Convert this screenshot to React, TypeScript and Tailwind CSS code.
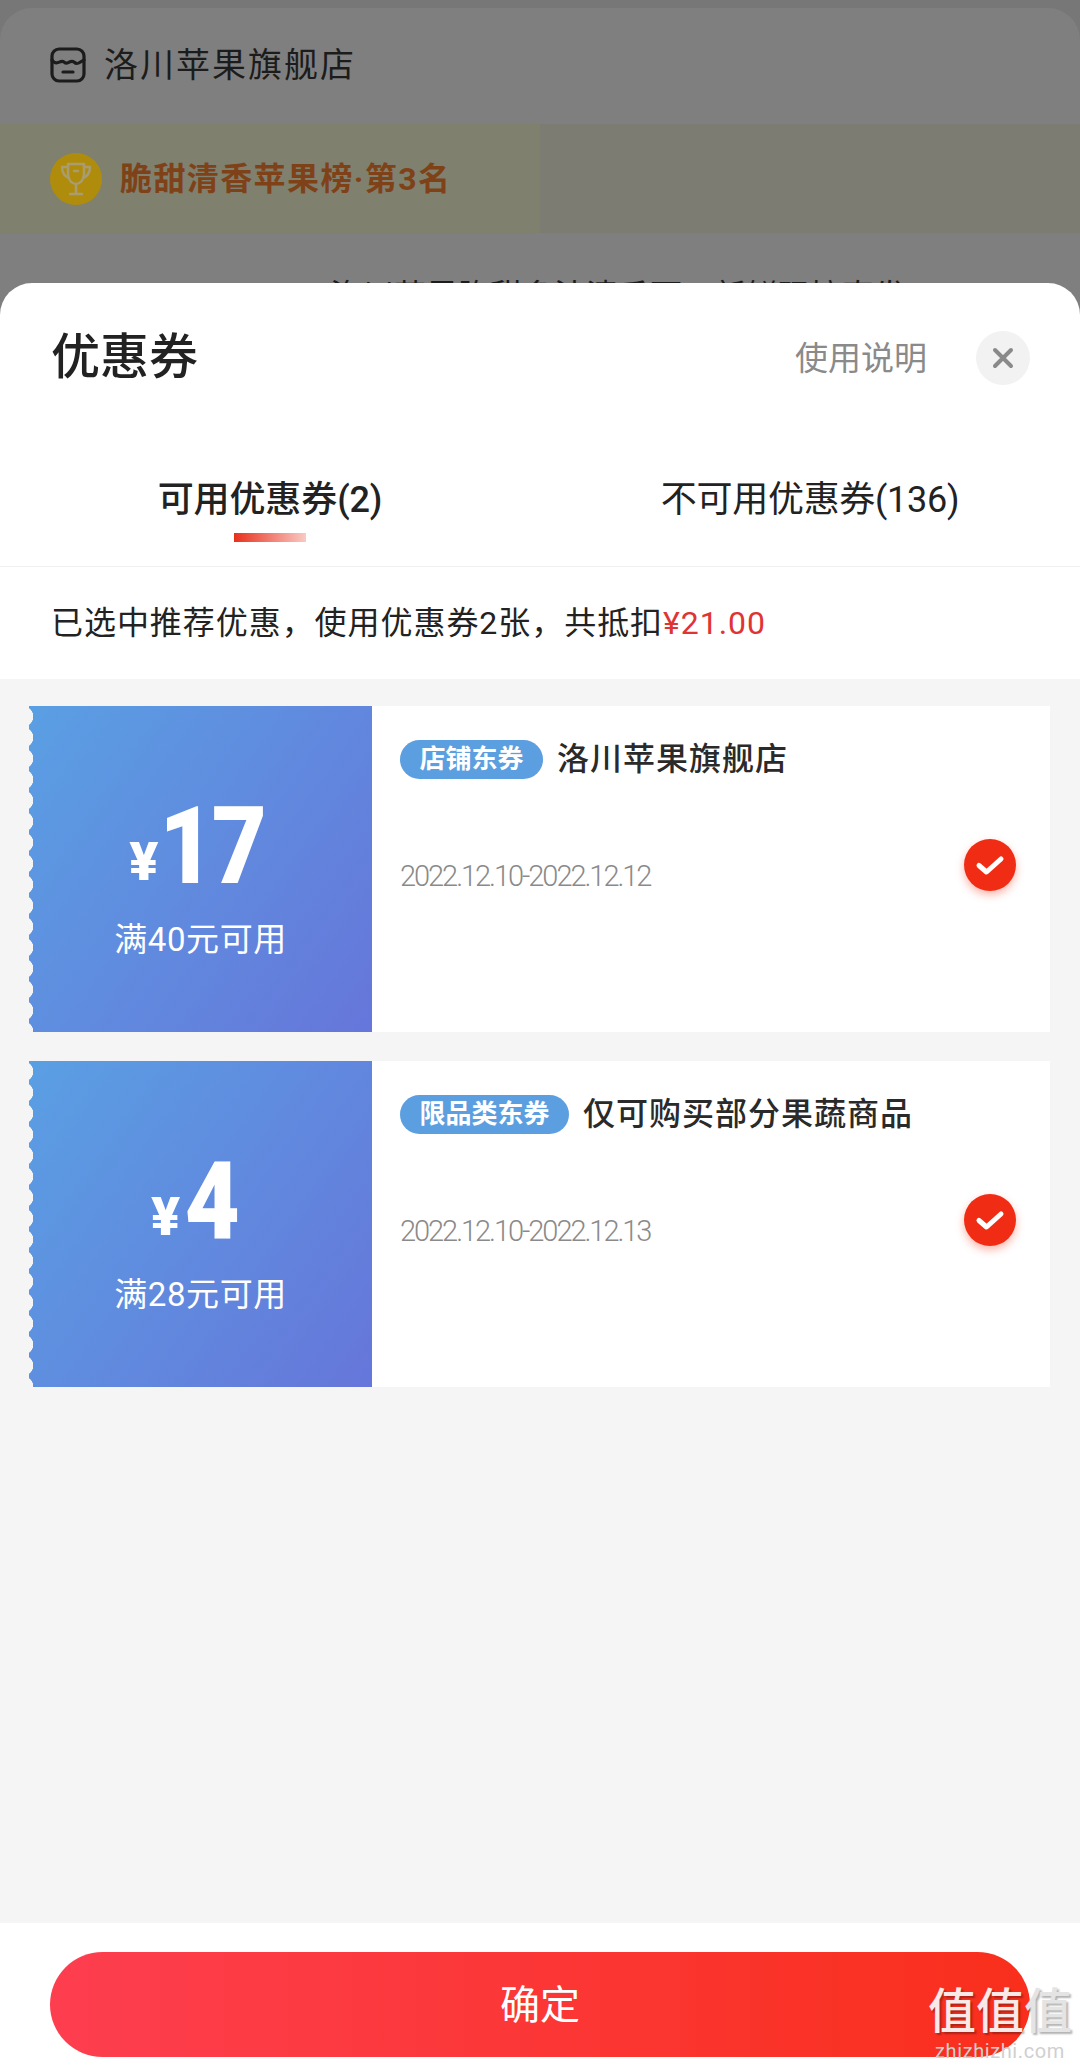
import React from 'react';

type Coupon = {
    amount: string;
    condition: string;
    tag: string;
    title: string;
    date: string;
    amountRowClass: string;
    yenClass: string;
};

const coupons: Coupon[] = [
    { amount: '17', condition: '满40元可用', tag: '店铺东券', title: '洛川苹果旗舰店', date: '2022.12.10-2022.12.12', amountRowClass: 'pl-[2px]', yenClass: 'mr-[-7px]' },
    { amount: '4', condition: '满28元可用', tag: '限品类东券', title: '仅可购买部分果蔬商品', date: '2022.12.10-2022.12.13', amountRowClass: 'pr-[6px]', yenClass: 'mr-[1px]' },
];

const CheckBadge = () => (
    <div className="flex h-[52px] w-[52px] items-center justify-center rounded-full bg-[#f02d14] shadow-[0_4px_8px_rgba(240,45,20,0.35)]">
        <svg width="32" height="24" viewBox="0 0 32 24" fill="none">
            <path d="M5 12.5 L12.5 19 L27 6" stroke="#fff" strokeWidth="5" strokeLinecap="round" strokeLinejoin="round" />
        </svg>
    </div>
);

const CouponCard = ({ coupon }: { coupon: Coupon }) => (
    <div className="flex h-[326px] bg-white">
        <div className="relative flex w-[343px] flex-col items-center bg-[linear-gradient(125deg,#5a9fe3,#6676da)] text-white">
            {/* scalloped ticket edge */}
            <div className="absolute bottom-0 left-0 top-0 w-[8px] bg-[radial-gradient(circle_at_-6px_10.5px,#f5f5f5_10px,transparent_10.5px)] bg-[length:8px_21px]" />
            <div className={`${coupon.amountRowClass} mt-[78px] flex h-[120px] items-end justify-center`}>
                <span className={`${coupon.yenClass} mb-[15px] text-[54px] font-black leading-none`}>¥</span>
                <span className="origin-center scale-x-[0.88] pb-[4px] pr-[3px] text-[108px] font-black leading-[1] tracking-[-3px]">{coupon.amount}</span>
            </div>
            <div className="mt-[16px] text-[33px] leading-[40px] tracking-[0.6px]">{coupon.condition}</div>
        </div>
        <div className="flex flex-1 items-start justify-between pl-[28px] pr-[34px]">
            <div>
                <div className="mt-[29px] flex items-center">
                    <span className="flex h-[39px] items-center rounded-full bg-[#5c9fe0] px-[19.5px] text-[26px] font-bold text-white">{coupon.tag}</span>
                    <span className="ml-[14px] text-[32px] font-medium tracking-[1px] text-[#2a2a2a]">{coupon.title}</span>
                </div>
                <div className="mt-[73px] text-[29px] font-light leading-[40px] tracking-[-2.05px] text-[#8a8a8a]">{coupon.date}</div>
            </div>
            <div className="mt-[133px]">
                <CheckBadge />
            </div>
        </div>
    </div>
);

export default function App() {
    return (
        <div className="relative h-[2068px] w-[1080px] overflow-hidden bg-[#777777] font-[Roboto,'Noto_Sans_CJK_SC',sans-serif]">
            {/* dimmed page behind the sheet */}
            <div className="mt-[8px] h-[400px] rounded-t-[32px] bg-[#7f7f7f]">
                <div className="flex h-[116px] items-center pb-[2px] pl-[50px]">
                    <svg width="36" height="36" viewBox="0 0 36 36" fill="none" stroke="#1c1c1c" strokeWidth="3.2" strokeLinecap="round" strokeLinejoin="round">
                        <rect x="2" y="2" width="32" height="32" rx="7" />
                        <path d="M2 13 C7 20 10 12 14 15 C17 19 20 12 24 15 C28 19 31 14 34 13" />
                        <path d="M13 25 H23" />
                    </svg>
                    <span className="ml-[18px] text-[34px] tracking-[2px] text-[#1c1c1c]">洛川苹果旗舰店</span>
                </div>
                <div className="flex h-[109px] bg-[#7c7c72]">
                    <div className="flex w-[540px] items-center bg-[#80806f] pl-[50px]">
                        <div className="flex h-[52px] w-[52px] items-center justify-center rounded-full bg-[#b08c0c]">
                            <svg width="34" height="38" viewBox="0 0 34 38" fill="none" stroke="#a89c70" strokeWidth="2.5" strokeLinecap="round" strokeLinejoin="round">
                                <path d="M9 4 H25 V14 C25 20 21 24 17 24 C13 24 9 20 9 14 Z" />
                                <path d="M9 7 H3 C3 13 5 16 10 18 M25 7 H31 C31 13 29 16 24 18" />
                                <path d="M17 24 V33 M11 34 H23" />
                                <path d="M15 11 H19" />
                            </svg>
                        </div>
                        <span className="ml-[18px] text-[32px] font-bold tracking-[1.4px] text-[#7f4218]">脆甜清香苹果榜·第3名</span>
                    </div>
                </div>
                <div className="mt-[43px] pl-[330px] text-[32px] leading-[40px] text-[#1c1c1c]">
                    洛川苹果脆甜多汁清香可口新鲜现摘直发
                </div>
            </div>

            {/* coupon sheet */}
            <div className="absolute inset-x-0 bottom-0 top-[283px] flex flex-col overflow-hidden rounded-t-[32px] bg-white">
                <div className="flex h-[148px] items-start justify-between pl-[51px] pr-[50px]">
                    <span className="mt-[45px] text-[49px] font-medium leading-[60px] text-[#222]">优惠券</span>
                    <div className="mt-[47px] flex items-center">
                        <span className="pt-[2px] text-[33px] leading-[54px] text-[#8a8a8a]">使用说明</span>
                        <div className="ml-[49px] flex h-[54px] w-[54px] items-center justify-center rounded-full bg-[#f2f2f2]">
                            <svg width="24" height="24" viewBox="0 0 24 24" fill="none" stroke="#8a8a8a" strokeWidth="4" strokeLinecap="round">
                                <path d="M4 4 L20 20 M20 4 L4 20" />
                            </svg>
                        </div>
                    </div>
                </div>

                <div className="grid h-[136px] grid-cols-2 border-b border-[#f0f0f0]">
                    <div className="flex flex-col items-center pt-[46px]">
                        <span className="text-[36px] font-medium leading-[46px] tracking-[-0.1px] text-[#222]">可用优惠券(2)</span>
                        <div className="mt-[10px] h-[9px] w-[72px] bg-[linear-gradient(90deg,#e8301c,#f9c9c4)]" />
                    </div>
                    <div className="flex justify-center pt-[46px]">
                        <span className="text-[36px] leading-[46px] tracking-[-0.3px] text-[#222]">不可用优惠券(136)</span>
                    </div>
                </div>

                <div className="flex h-[112px] items-center pl-[51px] text-[32px] tracking-[0.95px] text-[#222]">
                    已选中推荐优惠，使用优惠券2张，共抵扣<span className="text-[#e03434]">¥21.00</span>
                </div>

                <div className="flex flex-1 flex-col gap-[29px] bg-[#f5f5f5] pl-[29px] pr-[30px] pt-[27px]">
                    {coupons.map((coupon) => (
                        <CouponCard key={coupon.date} coupon={coupon} />
                    ))}
                </div>

                <div className="flex h-[145px] justify-center bg-white pt-[29px]">
                    <button className="h-[105px] w-[980px] rounded-full bg-[linear-gradient(90deg,#fd3e4f,#f92f1c)] pt-[2px] text-[40px] text-white">确定</button>
                </div>
            </div>

            {/* site watermark */}
            <div className="absolute bottom-[6px] right-[8px] flex flex-col items-center text-white/90">
                <div className="text-[48px] font-medium leading-[56px] [text-shadow:2px_2px_2px_rgba(0,0,0,0.3)]">
                    值值<span className="text-[#e4e4e4]">值</span>
                </div>
                <div className="text-[20px] leading-[22px] tracking-[0.6px] text-[#d0d0d0]">zhizhizhi.com</div>
            </div>
        </div>
    );
}
